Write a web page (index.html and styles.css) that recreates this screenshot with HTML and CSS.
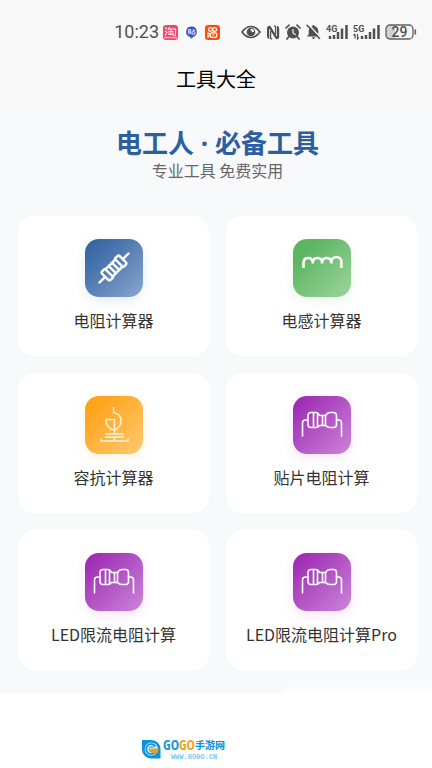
FILE: index.html
```html
<!DOCTYPE html>
<html lang="zh-CN">
<head>
<meta charset="utf-8">
<meta name="viewport" content="width=device-width, initial-scale=1">
<title>工具大全</title>
<link rel="stylesheet" href="styles.css">
</head>
<body>
<svg class="defs" aria-hidden="true">
  <symbol id="leads" viewBox="0 0 58 58">
    <g fill="none" stroke="#fff" stroke-width="1.6" stroke-linecap="round" stroke-linejoin="round">
      <path d="M9.500 40V27q0-3 3-3H15M48.500 40V27q0-3-3-3H43.500"/>
      <path d="M18 16.500h5q2 0 3.500 3h6q2-3 4.500-3h3.500q3 0 3 3V28.500q0 3-3 3H37q-2.500 0-4.500-2h-6q-1.500 2-3.500 2h-5q-3 0-3-3v-9q0-3 3-3z"/>
      <path d="M20.500 17v14M24.500 17.500v13M29.500 19.500v10M32.500 19.500v10"/>
    </g>
  </symbol>
</svg>

<header class="top">
  <div class="status">
    <span class="clock">10:23</span>
    <div class="apps">
      <svg width="15" height="15" viewBox="0 0 15 15"><rect width="15" height="15" rx="3" fill="#f0476f"/><path d="M1 12.500h13" stroke="#ffb2a8" stroke-width="1.500"/><path d="M2 2.500l2 1.500M2 6l2 1.500L2 10.500M6.500 2L5 5M6 4h6.500v5.500q0 1.500-2 1M5.500 6.500h5M8 4.500v5M6 7.500v2h4v-2" fill="none" stroke="#ffe9ef" stroke-width="1.100"/></svg>
      <svg width="15" height="15" viewBox="0 0 15 15"><rect width="15" height="15" rx="3" fill="#fff"/><path d="M7.500 1.500a5.300 5.300 0 0 1 1.800 10.300L7.500 14l-1.800-2.200A5.300 5.300 0 0 1 7.500 1.500z" fill="#3f4fc2"/><path d="M4 10.500a5 5 0 0 0 7 0L7.500 14z" fill="#16b4e8"/><path d="M4.500 8V4.500h2.300V8M5.700 5.500v2L4.500 9.500M6 8l1 1.300M9.300 4v2.500M9.300 5.200h1.700M8 6.800h3v2.400H8z" fill="none" stroke="#fff" stroke-width=".8"/></svg>
      <svg width="15" height="15" viewBox="0 0 15 15"><rect width="15" height="15" rx="3" fill="#fb4e0b"/><g fill="none" stroke="#fff" stroke-width="1.200"><circle cx="5.500" cy="4.500" r="1.900"/><circle cx="9.700" cy="4.500" r="1.900"/><rect x="5.300" y="7.800" width="6.400" height="4.500" rx="1.300"/><path d="M5.300 9.200L3 8v4l2.300-1.200"/><path d="M7.800 9.200v1.600l1.500-.8z" stroke-width=".6"/></g></svg>
    </div>
    <div class="system">
      <svg width="20" height="14" viewBox="0 0 20 14"><path d="M1 7q4-5.500 9-5.500T19 7q-4 5.500-9 5.500T1 7z" fill="none" stroke="#505050" stroke-width="1.700"/><circle cx="10" cy="7" r="4.300" fill="#505050"/><path d="M10 3.800a3 3 0 0 1 3 3.200h-2q0-1.300-1.500-1.500z" fill="#f8f8f8"/></svg>
      <svg width="14" height="15" viewBox="0 0 14 15"><path d="M3.700.7Q1 .7 1 3.700v7.600q0 2.700 2.200 3V3.500l6 9.500q.8 1.300 1.300 1.300 2.700 0 2.700-3V3.700q0-2.500-2.200-3v10.800l-6-9.500Q4.300.7 3.700.7z" fill="#505050"/><path d="M4.600 6v7.300l1.500 1M9.600 9V1.700L8 .7" fill="none" stroke="#505050" stroke-width="1.300"/></svg>
      <svg width="16" height="16" viewBox="0 0 16 16"><circle cx="8" cy="8.500" r="6" fill="#505050"/><path d="M1 4l3-2.800M15 4l-3-2.800M3.500 13L2 15M12.500 13l1.500 2" stroke="#505050" stroke-width="1.700" stroke-linecap="round"/><path d="M8 5v4l2.700 1.700" fill="none" stroke="#f8f8f8" stroke-width="1.200"/></svg>
      <svg width="15" height="16" viewBox="0 0 15 16"><path d="M7.500 1q1.200 0 1.200 1.300 3.600 1 3.600 5v3L14 12.500H1l1.700-2.200v-3q0-4 3.600-5Q6.300 1 7.500 1zM5.800 13.300h3.400q-.4 1.700-1.700 1.700t-1.700-1.700z" fill="#505050"/><path d="M2.500.5L15 14" stroke="#f8f8f8" stroke-width="1.400"/><path d="M1 1.300L13.500 14.500" stroke="#505050" stroke-width="1.500" stroke-linecap="round"/></svg>
      <svg class="signal" width="22" height="18" viewBox="0 0 22 18"><text x="0" y="9">4G</text><path d="M4 16v-3M8 16v-4M12 16V9M16 16V5.500M20.500 16V2" stroke="#505050" stroke-width="2.500"/></svg>
      <svg class="signal" width="27" height="18" viewBox="0 0 27 18"><text x="0" y="9">5G</text><path d="M2 11v4.500M.5 12.500L2 11M4.500 11v5l1.300-1.500" fill="none" stroke="#505050" stroke-width="1.200"/><path d="M9 16v-3M13 16v-4M17 16V9M21 16V5.500M25.500 16V2" stroke="#505050" stroke-width="2.500"/></svg>
      <svg class="battery" width="32" height="16" viewBox="0 0 32 16"><path d="M5 1h5v14H5q-4 0-4-4V5q0-4 4-4z" fill="#d2d2d2"/><rect x="1" y="1" width="27" height="14" rx="4" fill="none" stroke="#606060" stroke-width="1.300"/><path d="M30.300 6v4" stroke="#606060" stroke-width="1.600" stroke-linecap="round"/><text x="14.500" y="13">29</text></svg>
    </div>
  </div>
  <h1 class="page-title">工具大全</h1>
</header>

<main class="content">
  <h2 class="headline">电工人 · 必备工具</h2>
  <p class="tagline">专业工具 免费实用</p>

  <nav class="tools">
    <a class="card" href="#resistor">
      <span class="tile blue"><svg viewBox="0 0 58 58"><g transform="translate(29 29) rotate(-45)" fill="none" stroke="#fff" stroke-width="2.400" stroke-linecap="round" stroke-linejoin="round"><path d="M-20.500 0h8M12.500 0h8"/><path d="M-10.500-6h3l1.500 1H6l1.500-1h3q2 0 2 2v8q0 2-2 2h-3L6 5H-6l-1.500 1h-3q-2 0-2-2v-8q0-2 2-2z"/><path d="M-7-5V5M-2.300-5V5M2.300-5V5M7-5V5"/></g></svg></span>
      <span class="name">电阻计算器</span>
    </a>
    <a class="card" href="#inductor">
      <span class="tile green"><svg viewBox="0 0 58 58"><path d="M10.500 29v-6a4.700 4.700 0 0 1 9.300 0v1.500V23a4.700 4.700 0 0 1 9.300 0v1.500V23a4.700 4.700 0 0 1 9.300 0v1.500V23a4.700 4.700 0 0 1 10 0v6" fill="none" stroke="#fff" stroke-width="2.600"/></svg></span>
      <span class="name">电感计算器</span>
    </a>
    <a class="card" href="#reactance">
      <span class="tile orange"><svg viewBox="0 0 58 58"><path d="M28.500 11v5.500q7.500 1.500 7.500 8.500 0 6-6.500 9-8.500-1-8.500-10.500h8.500V38M20 38h19M20 41h19M29.500 41v4M16 42.500V45h27v-2.500" fill="none" stroke="#fff2d5" stroke-width="1.400"/></svg></span>
      <span class="name">容抗计算器</span>
    </a>
    <a class="card" href="#smd">
      <span class="tile purple"><svg><use href="#leads"/></svg></span>
      <span class="name">贴片电阻计算</span>
    </a>
    <a class="card" href="#led">
      <span class="tile purple"><svg><use href="#leads"/></svg></span>
      <span class="name">LED限流电阻计算</span>
    </a>
    <a class="card" href="#led-pro">
      <span class="tile purple"><svg><use href="#leads"/></svg></span>
      <span class="name">LED限流电阻计算Pro</span>
    </a>
  </nav>
</main>

<footer class="brand">
  <svg width="20" height="20" viewBox="0 0 20 20"><path d="M1 1h9.500a9 9 0 0 1 9 9v9.500H10A9 9 0 0 1 1 10.500z" fill="#0795dc"/><circle cx="10.300" cy="10" r="6.600" fill="#d9f3fd"/><path d="M14.500 7.500a5 5 0 1 0 0 5" fill="none" stroke="#168bc9" stroke-width="1.700"/><path d="M12.500 8.500a2.500 2.500 0 1 0 0 3.500" fill="none" stroke="#41bce9" stroke-width="1.300"/><path d="M9.500 9.500h8q0 5-4 6.500.5-3.500-4-4z" fill="#f59a18"/></svg>
  <div class="brand-text">
    <div class="brand-name"><b class="cyan">GO</b><b class="amber">GO</b><span>手游网</span></div>
    <div class="brand-url">WWW.GOGO.CN</div>
  </div>
</footer>
</body>
</html>
```
FILE: styles.css
```css
* { box-sizing: border-box; }

body {
  margin: 0;
  min-height: 100vh;
  background: #fff;
  color: #333;
  font-family: "Noto Sans", "Noto Sans CJK SC", sans-serif;
  display: flex;
  flex-direction: column;
}

h1, h2, p { margin: 0; }
svg { display: block; flex: none; }
.defs { position: absolute; width: 0; height: 0; }

.top { background: #f8f8f8; }

.status {
  display: flex;
  align-items: center;
  justify-content: flex-end;
  height: 64px;
  padding-right: 15px;
}
.clock {
  margin-right: 4px;
  font: 18px/24px Roboto, sans-serif;
  color: #505050;
}
.apps { display: flex; gap: 6px; margin-right: 21px; }
.system { display: flex; align-items: center; gap: 5px; }
.signal { overflow: visible; }
.signal text {
  font: 700 9px Roboto, sans-serif;
  fill: #505050;
}
.battery text {
  font: 500 14px Roboto, sans-serif;
  fill: #505050;
  text-anchor: middle;
}

.page-title {
  padding-bottom: 12px;
  font: 400 20px/30px "Noto Sans CJK SC", sans-serif;
  color: #000;
  text-align: center;
}

.content {
  position: relative;
  padding: 20px 15px 23px 18px;
  background: #f8f9fb;
  text-align: center;
}
.content::after {
  content: "";
  position: absolute;
  right: 0;
  bottom: 0;
  width: 34%;
  height: 11px;
  background: linear-gradient(#f8f9fb, #fdfdfe);
}
.headline {
  font: 700 26px/34px "Noto Sans", "Noto Sans CJK SC", sans-serif;
  color: #2c5f9f;
}
.tagline {
  font: 400 16px/20px "Noto Sans CJK SC", sans-serif;
  color: #666;
}

.tools {
  display: grid;
  grid-template-columns: 1fr 1fr;
  gap: 17px;
  margin-top: 36px;
}
.card {
  display: flex;
  flex-direction: column;
  align-items: center;
  gap: 11px;
  padding: 23px 0 24px;
  border-radius: 16px;
  background: #fff;
  color: #333;
  text-decoration: none;
}
.tile {
  width: 58px;
  height: 58px;
  border-radius: 14px;
}
.tile svg { width: 58px; height: 58px; }
.blue {
  background: linear-gradient(135deg, #2c5f9f, #4a76ae 35%, #8ba6cf);
  box-shadow: 0 4px 12px rgba(44, 95, 159, 0.12);
}
.green {
  background: linear-gradient(135deg, #5cb55f 20%, #9dd49f);
  box-shadow: 0 4px 12px rgba(76, 175, 80, 0.12);
}
.orange {
  background: linear-gradient(135deg, #ff9d0c, #ffc96f);
  box-shadow: 0 4px 12px rgba(255, 152, 0, 0.12);
}
.purple {
  background: linear-gradient(135deg, #9f2db4 10%, #cb85d8);
  box-shadow: 0 4px 12px rgba(176, 39, 196, 0.12);
}
.name {
  font: 400 16px/24px "Noto Sans CJK SC", sans-serif;
  white-space: nowrap;
}

.brand {
  display: flex;
  align-items: center;
  justify-content: center;
  gap: 2px;
  margin-top: auto;
  padding: 0 66px 7px 0;
}
.brand-name {
  display: flex;
  align-items: center;
  font: 700 10px/16px "Noto Sans CJK SC", sans-serif;
  color: #0b8fd6;
}
.brand-name b { font: 700 14px/16px "Open Sans Condensed", "DejaVu Sans Condensed", sans-serif; }
.brand-name .cyan { color: #1597dc; }
.brand-name .amber { color: #f9a11b; }
.brand-url {
  font: 700 7px/8px "Liberation Mono", monospace;
  color: #7cc6ec;
  text-align: center;
}
```
